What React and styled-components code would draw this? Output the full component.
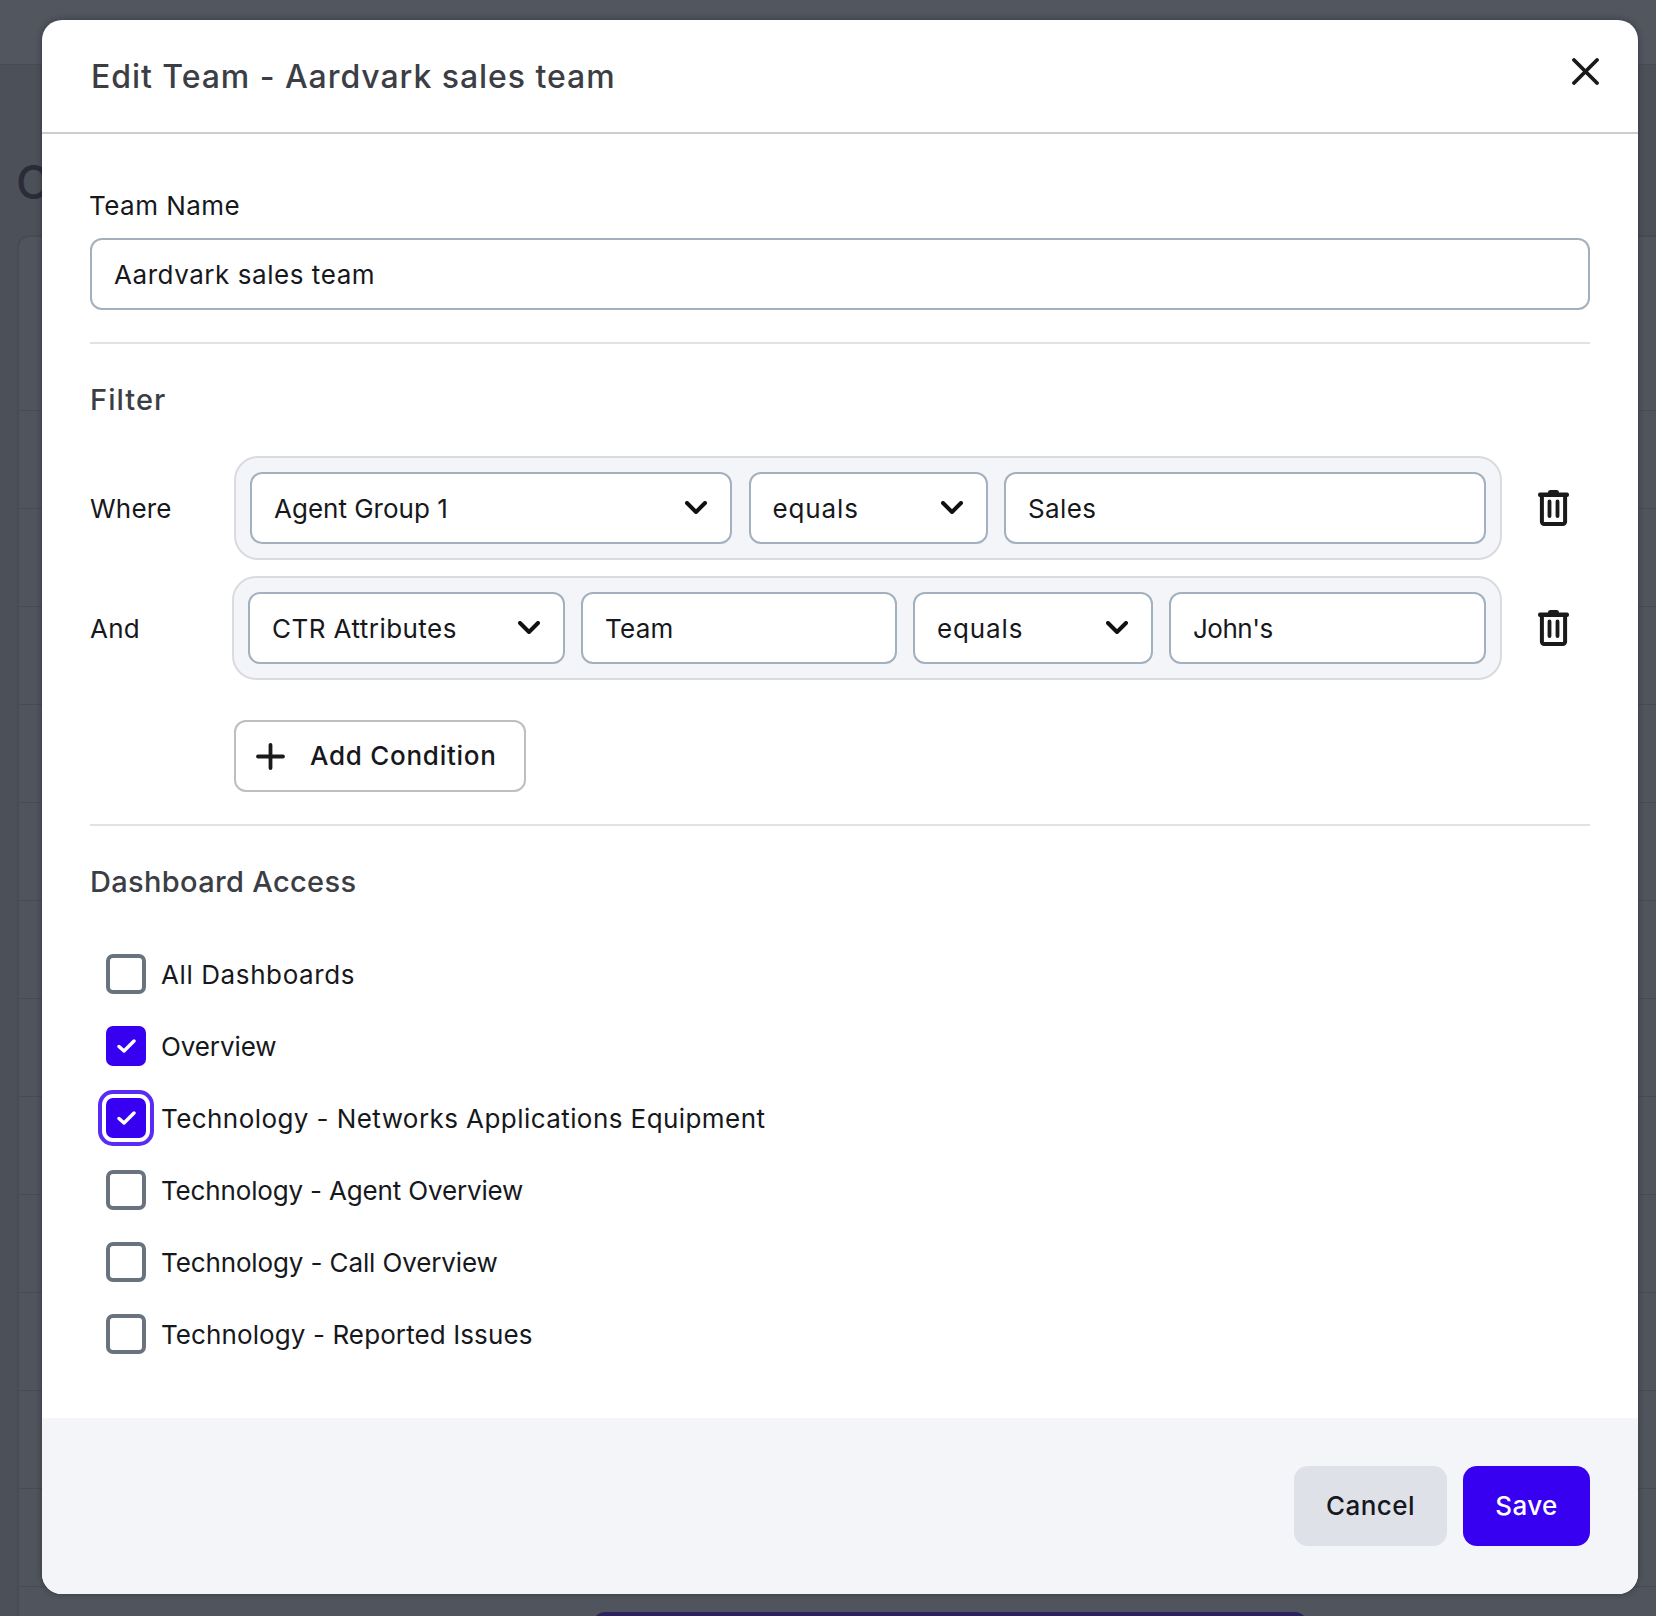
import React from "react";
import styled, { createGlobalStyle } from "styled-components";

const Global = createGlobalStyle`
  html, body { margin: 0; padding: 0; background: #4c5058; }
  * { box-sizing: border-box; }
  body { font-family: "Inter", "Liberation Sans", sans-serif; }
`;

const Page = styled.div`
  position: relative;
  width: 1656px;
  height: 1616px;
  overflow: hidden;
  background: #4c5058;
`;
const TopBar = styled.div`
  height: 65px;
  background: #52565f;
  border-bottom: 1px solid #474b53;
`;
const PageBody = styled.div`
  padding: 92px 0 0 17px;
`;
const PageTitle = styled.h1`
  margin: 0 0 27px -1px;
  height: 51px;
  font: 500 46px/51px "Inter", sans-serif;
  color: #2a2d38;
`;
const Card = styled.div`
  background: #50545c;
  border: 2px solid #474b53;
  border-right: 0;
  border-radius: 12px 0 0 0;
  padding-top: 173px;
`;
const BackRow = styled.div`
  height: 98px;
  border-top: 1px solid #474b53;
`;
const Toast = styled.div`
  position: absolute;
  left: 593px;
  top: 1612px;
  width: 714px;
  height: 40px;
  border-radius: 12px;
  background: #2e2160;
`;
const Modal = styled.div`
  position: absolute;
  left: 42px;
  top: 20px;
  width: 1596px;
  height: 1574px;
  background: #fff;
  border-radius: 20px;
  overflow: hidden;
  display: flex;
  flex-direction: column;
  box-shadow: 0 0 6px rgba(20, 22, 28, 0.45);
`;
const Header = styled.header`
  height: 114px;
  flex: none;
  display: flex;
  align-items: flex-start;
  justify-content: space-between;
  padding: 39px 39px 0 49px;
  border-bottom: 2px solid #cbcdcf;
`;
const Title = styled.h2`
  margin: 0;
  font: 500 32px/36px "Inter", sans-serif;
  letter-spacing: 0.95px;
  color: #3b3e44;
`;
const CloseIcon = styled.svg`
  width: 27px;
  height: 27px;
  margin-top: -1px;
  display: block;
`;
const Body = styled.div`
  flex: 1;
  padding: 58px 48px 0;
`;
const FieldLabel = styled.label`
  display: block;
  font: 400 26px/28px "Inter", sans-serif;
  letter-spacing: 0.47px;
  color: #16181c;
  margin-bottom: 18px;
  margin-left: -1px;
`;
const Field = styled.div`
  flex: ${(p) => p.$flex || "none"};
  width: ${(p) => (p.$width ? p.$width + "px" : "auto")};
  height: 72px;
  display: flex;
  align-items: center;
  justify-content: space-between;
  padding: 0 23px 0 22px;
  background: #fff;
  border: 2px solid #a3b1be;
  border-radius: 12px;
  font: 400 26px/32px "Inter", sans-serif;
  color: #16181c;
`;
const FieldText = styled.span`
  padding-top: 2px;
  letter-spacing: ${(p) => p.$track || 0}px;
`;
const Divider = styled.hr`
  border: 0;
  height: 2px;
  margin: 32px 0 0;
  background: #e0e2e5;
`;
const SectionTitle = styled.h3`
  margin: 38px 0;
  font: 500 29px/36px "Inter", sans-serif;
  letter-spacing: ${(p) => p.$track}px;
  color: #3b3e44;
`;
const FilterRow = styled.div`
  display: flex;
  align-items: center;
  margin-bottom: 16px;
`;
const RowLabel = styled.div`
  width: ${(p) => p.$width}px;
  flex: none;
  padding-top: 2px;
  font: 400 26px/32px "Inter", sans-serif;
  letter-spacing: 0.2px;
  color: #16181c;
`;
const Pill = styled.div`
  flex: 1;
  height: 104px;
  display: flex;
  align-items: center;
  gap: ${(p) => p.$gap}px;
  padding: 0 14px;
  background: #f3f5f9;
  border: 2px solid #d9dbe0;
  border-radius: 24px;
`;
const TrashIcon = styled.svg`
  width: 31px;
  height: 36px;
  flex: none;
  margin: 0 21px 0 36px;
  display: block;
`;
const Chevron = styled.svg`
  width: 22px;
  height: 13px;
  flex: none;
  display: block;
  margin-top: -2px;
`;
const AddButton = styled.button`
  display: flex;
  align-items: center;
  width: 292px;
  height: 72px;
  margin: 40px 0 0 144px;
  padding: 0 0 0 20px;
  background: #fff;
  border: 2px solid #bcbec2;
  border-radius: 12px;
  font: 500 26px/32px "Inter", sans-serif;
  letter-spacing: 0.73px;
  color: #16181c;
`;
const PlusIcon = styled.svg`
  width: 29px;
  height: 27px;
  margin-right: 25px;
  display: block;
`;
const CheckRow = styled.div`
  height: 72px;
  display: flex;
  align-items: center;
  gap: 15px;
  padding-left: 16px;
  font: 400 26px/32px "Inter", sans-serif;
  color: #16181c;
`;
const CheckLabel = styled.span`
  padding-top: 2px;
  letter-spacing: ${(p) => p.$track}px;
`;
const Box = styled.span`
  width: 40px;
  height: 40px;
  flex: none;
  display: flex;
  align-items: center;
  justify-content: center;
  border-radius: 7px;
  border: ${(p) => (p.$checked ? "0" : "4px solid #68737f")};
  background: ${(p) => (p.$checked ? "#3700f0" : "#fff")};
  box-shadow: ${(p) => (p.$focused ? "0 0 0 4px #fff, 0 0 0 8px #5a2bf5" : "none")};
`;
const CheckIcon = styled.svg`
  width: 19px;
  height: 14px;
  display: block;
`;
const Footer = styled.footer`
  flex: none;
  height: 176px;
  display: flex;
  justify-content: flex-end;
  align-items: center;
  gap: 16px;
  padding: 0 48px;
  background: #f3f5f9;
`;
const FootButton = styled.button`
  height: 80px;
  width: ${(p) => p.$width}px;
  border: 0;
  border-radius: 14px;
  background: ${(p) => (p.$primary ? "#3700f0" : "#dfe1e8")};
  color: ${(p) => (p.$primary ? "#fff" : "#16181c")};
  font: 500 26px/32px "Inter", sans-serif;
  letter-spacing: 0.45px;
`;

const Close = () => (
  <CloseIcon viewBox="0 0 27 27" fill="none" stroke="#1a1a1a" strokeWidth="3.8" strokeLinecap="round">
    <path d="M2 2 25 25M25 2 2 25" />
  </CloseIcon>
);
const Down = () => (
  <Chevron viewBox="0 0 22 13" fill="none" stroke="#111" strokeWidth="4" strokeLinecap="round" strokeLinejoin="round">
    <path d="M2 2 11 11 20 2" />
  </Chevron>
);
const Trash = () => (
  <TrashIcon viewBox="0 0 31 36" fill="none">
    <rect x="10" y="0" width="11" height="5" rx="2.5" fill="#1a1a1a" />
    <rect x="0" y="2.5" width="31" height="4.4" rx="2" fill="#1a1a1a" />
    <path d="M3.9 5V31.8a2.2 2.2 0 0 0 2.2 2.2H24.9a2.2 2.2 0 0 0 2.2-2.2V5" stroke="#1a1a1a" strokeWidth="4" />
    <path d="M11.5 11.5V26M19.5 11.5V26" stroke="#1a1a1a" strokeWidth="3.8" strokeLinecap="round" />
  </TrashIcon>
);
const Plus = () => (
  <PlusIcon viewBox="0 0 29 27" fill="none" stroke="#1a1a1a" strokeWidth="3.8" strokeLinecap="round">
    <path d="M14.5 2V25M2 13.5H27" />
  </PlusIcon>
);
const Check = () => (
  <CheckIcon viewBox="0 0 19 14" fill="none" stroke="#fff" strokeWidth="3.4" strokeLinecap="round" strokeLinejoin="round">
    <path d="M2 7.5 7 12 17 2" />
  </CheckIcon>
);

const dashboards = [
  { name: "All Dashboards", track: 0.6 },
  { name: "Overview", track: -0.1, checked: true },
  { name: "Technology - Networks Applications Equipment", track: 0.43, checked: true, focused: true },
  { name: "Technology - Agent Overview", track: -0.16 },
  { name: "Technology - Call Overview", track: -0.12 },
  { name: "Technology - Reported Issues", track: 0.1 },
];

export default function App() {
  return (
    <Page>
      <Global />
      <TopBar />
      <PageBody>
        <PageTitle>O</PageTitle>
        <Card>
          {Array.from({ length: 13 }).map((_, i) => (
            <BackRow key={i} />
          ))}
        </Card>
      </PageBody>
      <Toast />
      <Modal>
        <Header>
          <Title>Edit Team - Aardvark sales team</Title>
          <Close />
        </Header>
        <Body>
          <FieldLabel>Team Name</FieldLabel>
          <Field><FieldText $track={0.55}>Aardvark sales team</FieldText></Field>
          <Divider />
          <SectionTitle $track={1.05}>Filter</SectionTitle>
          <FilterRow>
            <RowLabel $width={144}>Where</RowLabel>
            <Pill $gap={16.5}>
              <Field $width={482}><FieldText>Agent Group 1</FieldText><Down /></Field>
              <Field $width={239}><FieldText $track={0.88}>equals</FieldText><Down /></Field>
              <Field $flex="1"><FieldText $track={0.4}>Sales</FieldText></Field>
            </Pill>
            <Trash />
          </FilterRow>
          <FilterRow>
            <RowLabel $width={142}>And</RowLabel>
            <Pill $gap={16}>
              <Field $width={317}><FieldText $track={0.45}>CTR Attributes</FieldText><Down /></Field>
              <Field $width={316}><FieldText $track={0.26}>Team</FieldText></Field>
              <Field $width={240}><FieldText $track={0.88}>equals</FieldText><Down /></Field>
              <Field $flex="1"><FieldText $track={-0.5}>John's</FieldText></Field>
            </Pill>
            <Trash />
          </FilterRow>
          <AddButton>
            <Plus />
            Add Condition
          </AddButton>
          <Divider />
          <SectionTitle $track={0.33}>Dashboard Access</SectionTitle>
          {dashboards.map((d) => (
            <CheckRow key={d.name}>
              <Box $checked={d.checked} $focused={d.focused}>
                {d.checked && <Check />}
              </Box>
              <CheckLabel $track={d.track}>{d.name}</CheckLabel>
            </CheckRow>
          ))}
        </Body>
        <Footer>
          <FootButton $width={153}>Cancel</FootButton>
          <FootButton $width={127} $primary>Save</FootButton>
        </Footer>
      </Modal>
    </Page>
  );
}
